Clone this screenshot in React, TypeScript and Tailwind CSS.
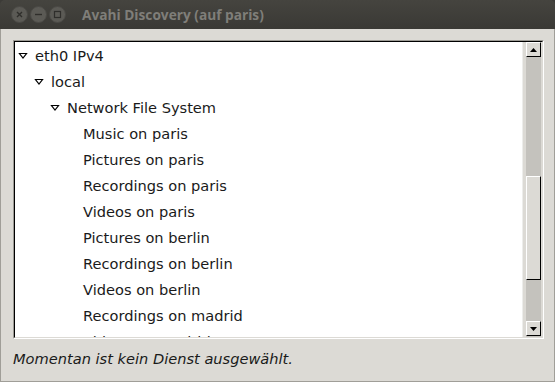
import React from "react";

const rows: { label: string; level: number; expander?: boolean }[] = [
  { label: "eth0 IPv4", level: 0, expander: true },
  { label: "local", level: 1, expander: true },
  { label: "Network File System", level: 2, expander: true },
  { label: "Music on paris", level: 3 },
  { label: "Pictures on paris", level: 3 },
  { label: "Recordings on paris", level: 3 },
  { label: "Videos on paris", level: 3 },
  { label: "Pictures on berlin", level: 3 },
  { label: "Recordings on berlin", level: 3 },
  { label: "Videos on berlin", level: 3 },
  { label: "Recordings on madrid", level: 3 },
  { label: "Videos on madrid", level: 3 },
];

const indentCls = ["pl-[3px]", "pl-[19px]", "pl-[35px]", "pl-[51px]"];

function Expander() {
  return (
    <svg width="10" height="8" viewBox="0 0 10 8" className="shrink-0">
      <path d="M1.5 1.5 L8.5 1.5 L5 6 Z" fill="none" stroke="#000" strokeWidth="1.2" strokeLinejoin="miter" />
    </svg>
  );
}

function WinButton({ kind }: { kind: "close" | "min" | "max" }) {
  return (
    <div className="w-[17px] h-[17px] rounded-full bg-[#5b5a55] border border-[#4a4945] flex items-center justify-center">
      <svg width="9" height="9" viewBox="0 0 9 9">
        {kind === "close" && (
          <path d="M2 2 L7 7 M7 2 L2 7" stroke="#2f2e2b" strokeWidth="1.4" />
        )}
        {kind === "min" && <path d="M1 4.5 L8 4.5" stroke="#2f2e2b" strokeWidth="1.4" />}
        {kind === "max" && <rect x="1.5" y="1.5" width="6" height="6" fill="none" stroke="#2f2e2b" strokeWidth="1.2" />}
      </svg>
    </div>
  );
}

export default function App() {
  return (
    <div className="w-[555px] h-[382px] bg-[#3c3b37] flex flex-col overflow-hidden">
      {/* Title bar */}
      <div className="h-[29px] shrink-0 flex items-center pl-[11px] bg-gradient-to-b from-[#45443f] to-[#3a3935] rounded-t-[5px]">
        <div className="flex gap-[2px] items-center">
          <WinButton kind="close" />
          <WinButton kind="min" />
          <WinButton kind="max" />
        </div>
        <div
          className="ml-[16px] text-[13.7px] font-bold text-[#7f7e79] leading-none"
          style={{ fontFamily: '"Open Sans", "DejaVu Sans", sans-serif' }}
        >
          Avahi Discovery (auf paris)
        </div>
      </div>
      {/* Body */}
      <div
        className="flex-1 bg-[#dcdad5] border-l border-r border-b border-[#a09e98] flex flex-col pl-[12px] pr-[10px] pt-[11px]"
        style={{ fontFamily: '"DejaVu Sans", sans-serif' }}
      >
        {/* Frame */}
        <div className="h-[299px] shrink-0 border-t border-l border-[#9c9a94] border-r border-b border-r-white border-b-white">
          <div className="h-full border-t border-l border-black border-r border-b border-r-[#dcdad5] border-b-[#dcdad5] flex">
            {/* Tree */}
            <div className="flex-1 bg-white overflow-hidden pt-[1px]">
              {rows.map((r) => (
                <div key={r.label} className={`h-[26px] flex items-center ${indentCls[r.level]}`}>
                  <div className="w-[17px] flex items-center justify-start">
                    {r.expander ? <Expander /> : null}
                  </div>
                  <span className="text-[14.6px] text-[#1a1a1a] whitespace-nowrap">{r.label}</span>
                </div>
              ))}
            </div>
            {/* Scrollbar */}
            <div className="w-[20px] flex border-l border-[#ededeb] pl-[3px]">
              <div className="w-[15px] bg-[#c4c2bd] flex flex-col">
                <div className="h-[15px] bg-[#dcdad5] border-t border-l border-white border-r border-b border-r-black border-b-black flex items-center justify-center">
                  <svg width="7" height="4" viewBox="0 0 7 4">
                    <path d="M0 4 L3.5 0 L7 4 Z" fill="#000" />
                  </svg>
                </div>
                <div className="flex-1 flex flex-col pt-[119px]">
                  <div className="h-[104px] bg-[#dcdad5] border-t border-l border-white border-r border-b border-r-black border-b-black" />
                </div>
                <div className="h-[15px] bg-[#dcdad5] border-t border-l border-white border-r border-b border-r-black border-b-black flex items-center justify-center">
                  <svg width="7" height="4" viewBox="0 0 7 4">
                    <path d="M0 0 L7 0 L3.5 4 Z" fill="#000" />
                  </svg>
                </div>
                <div className="h-[1px]" />
              </div>
            </div>
          </div>
        </div>
        {/* Status */}
        <div className="mt-[13px] text-[14.6px] italic text-[#1a1a1a] leading-none">
          Momentan ist kein Dienst ausgewählt.
        </div>
      </div>
    </div>
  );
}
